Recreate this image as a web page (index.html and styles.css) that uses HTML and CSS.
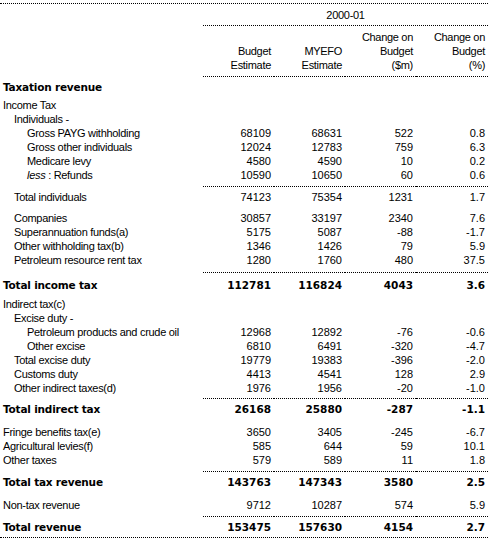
FILE: index.html
```html
<!DOCTYPE html>
<html lang="en">

<head>
    <meta charset="UTF-8">
    <meta name="viewport" content="width=device-width, initial-scale=1.0">
    <title>Taxation revenue 2000-01</title>
    <link rel="stylesheet" href="styles.css">
</head>

<body>
    <div class="sheet">
        <!-- column headings -->
        <div class="row year">
            <div></div>
            <div class="year-cell">2000-01</div>
        </div>
        <div class="row head">
            <div></div>
            <div class="num">Budget<br>Estimate</div>
            <div class="num">MYEFO<br>Estimate</div>
            <div class="num">Change on<br>Budget<br>($m)</div>
            <div class="num">Change on<br>Budget<br>(%)</div>
        </div>

        <div class="row section">
            <div class="label bold">Taxation revenue</div>
            <div></div><div></div><div></div><div></div>
        </div>

        <!-- income tax -->
        <div class="row">
            <div class="label">Income Tax</div>
            <div></div><div></div><div></div><div></div>
        </div>
        <div class="row">
            <div class="label lvl2">Individuals -</div>
            <div></div><div></div><div></div><div></div>
        </div>
        <div class="row">
            <div class="label lvl3">Gross PAYG withholding</div>
            <div class="num">68109</div><div class="num">68631</div><div class="num">522</div><div class="num">0.8</div>
        </div>
        <div class="row">
            <div class="label lvl3">Gross other individuals</div>
            <div class="num">12024</div><div class="num">12783</div><div class="num">759</div><div class="num">6.3</div>
        </div>
        <div class="row">
            <div class="label lvl3">Medicare levy</div>
            <div class="num">4580</div><div class="num">4590</div><div class="num">10</div><div class="num">0.2</div>
        </div>
        <div class="row rule gap-4">
            <div class="label lvl3"><i>less</i> : Refunds</div>
            <div class="num">10590</div><div class="num">10650</div><div class="num">60</div><div class="num">0.6</div>
        </div>
        <div class="row sub">
            <div class="label lvl2">Total individuals</div>
            <div class="num">74123</div><div class="num">75354</div><div class="num">1231</div><div class="num">1.7</div>
        </div>
        <div class="row">
            <div class="label lvl2">Companies</div>
            <div class="num">30857</div><div class="num">33197</div><div class="num">2340</div><div class="num">7.6</div>
        </div>
        <div class="row">
            <div class="label lvl2">Superannuation funds(a)</div>
            <div class="num">5175</div><div class="num">5087</div><div class="num">-88</div><div class="num">-1.7</div>
        </div>
        <div class="row">
            <div class="label lvl2">Other withholding tax(b)</div>
            <div class="num">1346</div><div class="num">1426</div><div class="num">79</div><div class="num">5.9</div>
        </div>
        <div class="row rule gap-5">
            <div class="label lvl2">Petroleum resource rent tax</div>
            <div class="num">1280</div><div class="num">1760</div><div class="num">480</div><div class="num">37.5</div>
        </div>
        <div class="row total total-a">
            <div class="label">Total income tax</div>
            <div class="num">112781</div><div class="num">116824</div><div class="num">4043</div><div class="num">3.6</div>
        </div>

        <!-- indirect tax -->
        <div class="row">
            <div class="label">Indirect tax(c)</div>
            <div></div><div></div><div></div><div></div>
        </div>
        <div class="row">
            <div class="label lvl2">Excise duty -</div>
            <div></div><div></div><div></div><div></div>
        </div>
        <div class="row">
            <div class="label lvl3">Petroleum products and crude oil</div>
            <div class="num">12968</div><div class="num">12892</div><div class="num">-76</div><div class="num">-0.6</div>
        </div>
        <div class="row">
            <div class="label lvl3">Other excise</div>
            <div class="num">6810</div><div class="num">6491</div><div class="num">-320</div><div class="num">-4.7</div>
        </div>
        <div class="row">
            <div class="label lvl2">Total excise duty</div>
            <div class="num">19779</div><div class="num">19383</div><div class="num">-396</div><div class="num">-2.0</div>
        </div>
        <div class="row">
            <div class="label lvl2">Customs duty</div>
            <div class="num">4413</div><div class="num">4541</div><div class="num">128</div><div class="num">2.9</div>
        </div>
        <div class="row rule gap-3">
            <div class="label lvl2">Other indirect taxes(d)</div>
            <div class="num">1976</div><div class="num">1956</div><div class="num">-20</div><div class="num">-1.0</div>
        </div>
        <div class="row total total-b">
            <div class="label">Total indirect tax</div>
            <div class="num">26168</div><div class="num">25880</div><div class="num">-287</div><div class="num">-1.1</div>
        </div>

        <!-- other taxes -->
        <div class="row">
            <div class="label">Fringe benefits tax(e)</div>
            <div class="num">3650</div><div class="num">3405</div><div class="num">-245</div><div class="num">-6.7</div>
        </div>
        <div class="row">
            <div class="label">Agricultural levies(f)</div>
            <div class="num">585</div><div class="num">644</div><div class="num">59</div><div class="num">10.1</div>
        </div>
        <div class="row rule gap-4">
            <div class="label">Other taxes</div>
            <div class="num">579</div><div class="num">589</div><div class="num">11</div><div class="num">1.8</div>
        </div>
        <div class="row total total-b">
            <div class="label">Total tax revenue</div>
            <div class="num">143763</div><div class="num">147343</div><div class="num">3580</div><div class="num">2.5</div>
        </div>
        <div class="row rule gap-4">
            <div class="label">Non-tax revenue</div>
            <div class="num">9712</div><div class="num">10287</div><div class="num">574</div><div class="num">5.9</div>
        </div>
        <div class="row total total-c last">
            <div class="label">Total revenue</div>
            <div class="num">153475</div><div class="num">157630</div><div class="num">4154</div><div class="num">2.7</div>
        </div>
    </div>
</body>

</html>
```

FILE: styles.css
```css
* {
    box-sizing: border-box;
    margin: 0;
    padding: 0;
}

body {
    font-family: "Liberation Sans", Arial, sans-serif;
    font-size: 11px;
    line-height: 14px;
    letter-spacing: -0.3px;
    color: #000;
    background-color: #fff;
}

.sheet {
    width: 488px;
    margin-top: 3px;
    border-top: 1px dotted #000;
}

.row {
    --pt: 0px;
    --pb: 0px;
    display: grid;
    grid-template-columns: 203px 71px 71px 71px 72px;
}

.row > div {
    padding-top: var(--pt);
    padding-bottom: var(--pb);
    white-space: nowrap;
}

.label {
    padding-left: 3px;
}

.lvl2 {
    padding-left: 14px;
}

.lvl3 {
    padding-left: 27px;
}

.num {
    text-align: right;
    padding-right: 3px;
    letter-spacing: 0;
}

.bold,
.total .label {
    font-family: "DejaVu Sans", Verdana, sans-serif;
    font-size: 10.5px;
    font-weight: bold;
    letter-spacing: -0.2px;
}

.total .num {
    font-family: "DejaVu Sans", Verdana, sans-serif;
    font-size: 10.5px;
    font-weight: bold;
}

/* Header rows */
.year {
    --pt: 4px;
    --pb: 3px;
}

.year-cell {
    grid-column: 2 / span 4;
    text-align: center;
    border-bottom: 1px dotted #000;
}

.head {
    --pt: 4px;
    --pb: 4px;
    align-items: end;
}

.head .num {
    border-bottom: 1px dotted #000;
    letter-spacing: -0.3px;
}

.section {
    --pt: 3px;
    --pb: 4px;
}

/* Spacing before rules and totals */
.gap-3 { --pb: 3px; }
.gap-4 { --pb: 4px; }
.gap-5 { --pb: 5px; }

.rule .num {
    border-bottom: 1px dotted #000;
}

.sub {
    --pt: 3px;
    --pb: 7px;
}

.total-a {
    --pt: 5px;
    --pb: 5px;
}

.total-b {
    --pt: 3px;
    --pb: 9px;
}

.total-c {
    --pt: 3px;
    --pb: 3px;
}

.last {
    border-bottom: 1px dotted #000;
}
```
